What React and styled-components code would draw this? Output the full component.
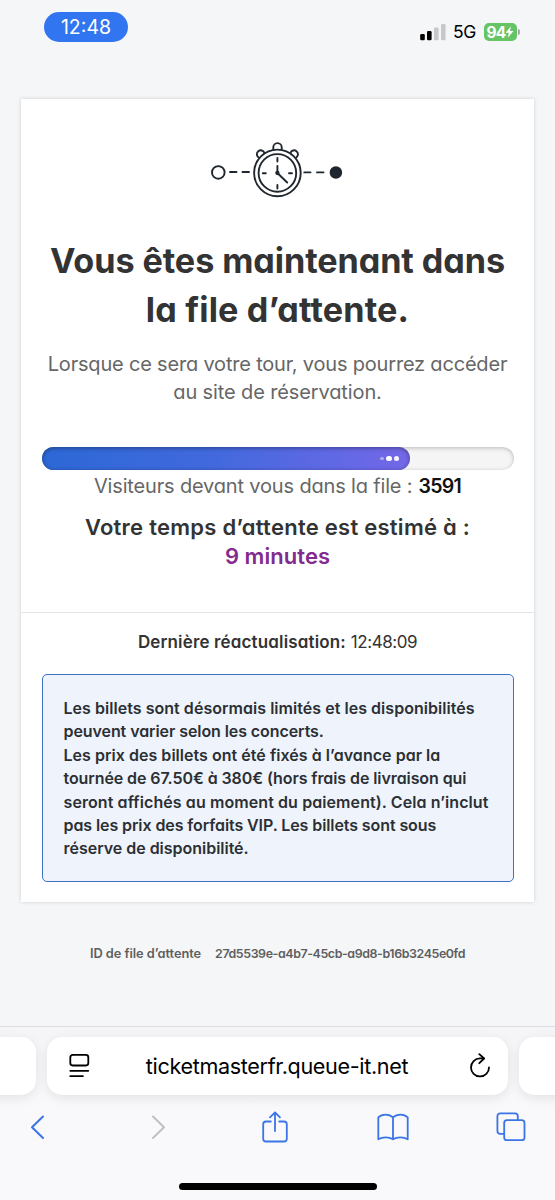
/**
 *
 * QueuePage
 *
 */

import React from 'react';
import styled, { createGlobalStyle } from 'styled-components';

const GlobalStyle = createGlobalStyle`
  * {
    box-sizing: border-box;
  }
  body {
    margin: 0;
    background: #f5f6f8;
    font-family: Inter, 'Open Sans', sans-serif;
  }
`;

const Screen = styled.div`
  display: flex;
  flex-direction: column;
  width: 555px;
  height: 1200px;
  overflow: hidden;
  background: #f5f6f8;
`;

/* status bar */

const StatusBar = styled.header`
  display: flex;
  justify-content: space-between;
  align-items: flex-start;
  flex: none;
  height: 99px;
  padding: 12px 35px 0 44px;
`;

const Clock = styled.div`
  width: 84px;
  height: 30px;
  border-radius: 15px;
  background: #3275f0;
  color: #fff;
  font-size: 19.5px;
  line-height: 30px;
  text-align: center;
`;

const StatusIcons = styled.div`
  display: flex;
  align-items: center;
  height: 20px;
  margin-top: 10px;
`;

const Network = styled.span`
  width: 38px;
  padding-left: 7px;
  color: #000;
  font-size: 17.5px;
  letter-spacing: -0.3px;
  line-height: 20px;
`;

const Battery = styled.div`
  display: flex;
  align-items: center;
  justify-content: center;
  width: 33px;
  height: 18px;
  border-radius: 5px;
  background: #65c466;
  color: #fff;
  font-size: 15.5px;
  font-weight: 700;
  letter-spacing: -0.8px;
`;

const BatteryTip = styled.span`
  width: 2px;
  height: 6px;
  margin-left: 1px;
  border-radius: 0 2px 2px 0;
  background: #a8aaac;
`;

/* card */

const Card = styled.main`
  flex: none;
  height: 803px;
  margin: 0 21px;
  background: #fff;
  box-shadow: 0 0 4px rgba(0, 0, 0, 0.16);
  font-feature-settings: 'cv11';
  text-align: center;
`;

const QueueStatus = styled.section`
  height: 514px;
  padding: 31px 20.5px 0;
  border-bottom: 1px solid #e4e4e4;
`;

const Line = styled.span`
  display: block;
  white-space: nowrap;
  letter-spacing: ${props => props.$track || 0}px;
`;

const Title = styled.h1`
  margin: 26px 0 0;
  color: #333;
  font-size: 34.2px;
  font-weight: 700;
  line-height: 49.2px;
`;

const Subtitle = styled.p`
  margin: 15.6px -10px 0;
  color: #666;
  font-size: 20px;
  line-height: 28.3px;
`;

const Track = styled.div`
  height: 23.5px;
  margin-top: 40px;
  border-radius: 12px;
  background: #f5f5f5;
  box-shadow: inset 0 1px 4px rgba(0, 0, 0, 0.25);
`;

const Fill = styled.div`
  display: flex;
  align-items: center;
  justify-content: flex-end;
  gap: 2.5px;
  height: 100%;
  padding-right: 10.5px;
  border-radius: 12px;
  background: linear-gradient(90deg, #2c68d6 0%, #4169dd 45%, #7468e8 100%);
  box-shadow: inset 0 1px 4px rgba(0, 0, 0, 0.4);
`;

const Dot = styled.span`
  width: ${props => props.$size}px;
  height: ${props => props.$size}px;
  border-radius: 50%;
  background: #fff;
  opacity: ${props => props.$opacity || 1};
`;

const Visitors = styled.p`
  display: flex;
  justify-content: center;
  gap: 6px;
  margin: 2px 0 0;
  color: #666;
  font-size: 20px;
  line-height: 28px;

  strong {
    color: #111;
    font-size: 19.5px;
    font-weight: 600;
    letter-spacing: -0.7px;
  }
`;

const WaitTime = styled.p`
  margin: 13px 0 0;
  color: #333;
  font-size: 22px;
  font-weight: 600;
  line-height: 28.7px;
`;

const Minutes = styled(Line)`
  color: #832b8f;
`;

const Details = styled.section`
  padding: 17px 20.5px 0;
`;

const Updated = styled.p`
  display: flex;
  justify-content: center;
  gap: 5px;
  margin: 0;
  color: #333;
  font-size: 17px;
  line-height: 24px;

  strong {
    font-weight: 600;
    letter-spacing: 0.148px;
  }
`;

const Notice = styled.div`
  height: 207.5px;
  margin-top: 20px;
  padding: 22px 21px 0;
  border: 1.5px solid #3f70c4;
  border-radius: 5px;
  background: #eff4fc;
  color: #2c2f34;
  font-size: 16px;
  font-weight: 600;
  line-height: 23.4px;
  text-align: left;
`;

const QueueId = styled.footer`
  display: flex;
  justify-content: center;
  flex: none;
  gap: 14px;
  height: 124px;
  padding-top: 42px;
  color: #5e5e60;
  font-size: 12.8px;
  font-weight: 600;
  font-feature-settings: 'cv11';
  line-height: 20px;
`;

const Ticket = styled(Line)`
  font-size: 12.4px;
`;

/* browser chrome */

const Browser = styled.nav`
  display: flex;
  flex-direction: column;
  align-items: center;
  flex: 1;
  border-top: 1px solid #dcdde0;
  background: linear-gradient(#f5f5f7, #f9f9fb 50%);
`;

const Tabs = styled.div`
  display: flex;
  justify-content: center;
  gap: 11px;
  width: 555px;
  margin-top: 9.5px;
`;

const Tab = styled.div`
  flex: none;
  width: 461px;
  height: 58px;
  border-radius: 15px;
  background: #fff;
  box-shadow: 0 3px 12px rgba(0, 0, 0, 0.09);
`;

const AddressBar = styled(Tab)`
  display: flex;
  align-items: center;
  justify-content: space-between;
  padding: 0 17px 0 21px;
`;

const Url = styled.span`
  margin-right: 5px;
  color: #000;
  font-size: 21.6px;
  letter-spacing: -0.35px;
`;

const Toolbar = styled.div`
  display: flex;
  justify-content: space-between;
  align-items: center;
  width: 555px;
  height: 36px;
  margin-top: 14.5px;
  padding: 0 27px 0 21px;
  color: #3b74e6;
`;

const Action = styled.div`
  display: flex;
  justify-content: center;
  width: 34px;
`;

const HomeIndicator = styled.div`
  width: 198px;
  height: 6.5px;
  margin-top: 38px;
  border-radius: 4px;
  background: #000;
`;

const Icon = styled.svg`
  display: block;
  flex: none;
  fill: none;
  stroke: ${props => props.$color || 'currentColor'};
  stroke-width: ${props => props.$stroke || 2};
  stroke-linecap: round;
  stroke-linejoin: round;
`;

const StopwatchIcon = styled(Icon)`
  margin: 0 auto;
`;

function Signal() {
  return (
    <svg width="26" height="18" viewBox="0 0 26 18">
      <rect x="0.2" y="11" width="4.6" height="6.2" rx="1.3" fill="#000" />
      <rect x="7" y="8" width="4.6" height="9.2" rx="1.3" fill="#000" />
      <rect x="14" y="4.4" width="4.6" height="12.8" rx="1.3" fill="#c6c8ca" />
      <rect x="21" y="1" width="4.6" height="16.2" rx="1.3" fill="#c6c8ca" />
    </svg>
  );
}

function Bolt() {
  return (
    <svg width="9" height="12" viewBox="0 0 9 12">
      <path d="M5.8 0.3 0.6 6.7h3.2L2.8 11.7 8.5 5H5.1z" fill="#fff" />
    </svg>
  );
}

function Stopwatch() {
  return (
    <StopwatchIcon
      width="155"
      height="80"
      viewBox="200 130 155 80"
      $color="#1f262d"
      $stroke={1.9}
    >
      <circle cx="218.3" cy="172.4" r="6.3" />
      <path d="M230 172h6.5M242.500 172h6.500M304.300 172.400h6.200M317 172.400h6.500" />
      <circle cx="277.4" cy="172.9" r="23.3" />
      <circle cx="277.4" cy="172.9" r="18.8" />
      <path d="M273.3 149.3v-2a4.2 4.2 0 0 1 8.4 0v2" />
      <path d="M258.3 157.3a3.9 3.9 0 1 1 6-4.6M296.500 157.300a3.900 3.900 0 1 0-6-4.600" />
      <path d="M277.4 158v3.5M277.400 185v3.500M262.800 173.200h3M289 173.200h3" />
      <path d="M277.4 166v7l9.8 9.5" />
      <circle cx="277.4" cy="173" r="1.2" />
      <circle cx="335.9" cy="172.5" r="5.3" fill="#1f262d" />
    </StopwatchIcon>
  );
}

function Dots() {
  return (
    <>
      <Dot $size={3.5} $opacity={0.45} />
      <Dot $size={5.5} />
      <Dot $size={5} $opacity={0.95} />
    </>
  );
}

const notice = [
  ['Les billets sont désormais limités et les disponibilités', 0.04],
  ['peuvent varier selon les concerts.', -0.08],
  ['Les prix des billets ont été fixés à l’avance par la', 0.035],
  ['tournée de 67.50€ à 380€ (hors frais de livraison qui', -0.085],
  ['seront affichés au moment du paiement). Cela n’inclut', 0.09],
  ['pas les prix des forfaits VIP. Les billets sont sous', -0.09],
  ['réserve de disponibilité.', -0.02],
];

export default function App() {
  const progress = 78;

  return (
    <Screen>
      <GlobalStyle />
      <StatusBar>
        <Clock>12:48</Clock>
        <StatusIcons>
          <Signal />
          <Network>5G</Network>
          <Battery>
            94
            <Bolt />
          </Battery>
          <BatteryTip />
        </StatusIcons>
      </StatusBar>

      <Card>
        <QueueStatus>
          <Stopwatch />
          <Title>
            <Line $track={-0.09}>Vous êtes maintenant dans</Line>
            <Line $track={0.162}>la file d’attente.</Line>
          </Title>
          <Subtitle>
            <Line $track={-0.19}>
              Lorsque ce sera votre tour, vous pourrez accéder
            </Line>
            <Line $track={-0.12}>au site de réservation.</Line>
          </Subtitle>
          <Track>
            <Fill style={{ width: `${progress}%` }}>
              <Dots />
            </Fill>
          </Track>
          <Visitors>
            <Line $track={-0.165}>Visiteurs devant vous dans la file :</Line>
            <strong>3591</strong>
          </Visitors>
          <WaitTime>
            <Line $track={0.26}>Votre temps d’attente est estimé à :</Line>
            <Minutes $track={0.05}>9 minutes</Minutes>
          </WaitTime>
        </QueueStatus>

        <Details>
          <Updated>
            <strong>Dernière réactualisation:</strong>
            <Line $track={-0.45}>12:48:09</Line>
          </Updated>
          <Notice>
            {notice.map(([text, track]) => (
              <Line key={text} $track={track}>
                {text}
              </Line>
            ))}
          </Notice>
        </Details>
      </Card>

      <QueueId>
        <Line $track={-0.05}>ID de file d’attente</Line>
        <Ticket $track={-0.4}>27d5539e-a4b7-45cb-a9d8-b16b3245e0fd</Ticket>
      </QueueId>

      <Browser>
        <Tabs>
          <Tab />
          <AddressBar>
            <Icon width="22" height="26" viewBox="0 0 22 26" $stroke={1.8}>
              <rect x="2.3" y="1.9" width="18" height="10.6" rx="2.4" />
              <path d="M2.3 17.8h18M2.3 23.2h12.6" />
            </Icon>
            <Url>ticketmasterfr.queue-it.net</Url>
            <Icon width="22" height="26" viewBox="0 0 22 26" $stroke={1.8}>
              <path d="M20 14.4a9 9 0 1 1-9-9h3.6" />
              <path d="M10.3 1.2l4.8 4.3-4.8 4.7" />
            </Icon>
          </AddressBar>
          <Tab />
        </Tabs>
        <Toolbar>
          <Action>
            <Icon width="20" height="30" viewBox="0 0 20 30">
              <path d="M15 4.5 4 15.2 15 26" />
            </Icon>
          </Action>
          <Action>
            <Icon width="20" height="30" viewBox="0 0 20 30" $color="#bfc0c3">
              <path d="M7 4.5 18 15.2 7 26" />
            </Icon>
          </Action>
          <Action>
            <Icon width="28" height="34" viewBox="0 0 28 34" $stroke={1.8}>
              <path d="M9.8 11.5H5a2.8 2.8 0 0 0-2.8 2.8v14.4A2.8 2.8 0 0 0 5 31.500h18a2.800 2.800 0 0 0 2.800-2.800V14.300a2.800 2.800 0 0 0-2.800-2.800h-4.800" />
              <path d="M14 21V2.5M9 7.3l5-5 5 5" />
            </Icon>
          </Action>
          <Action>
            <Icon width="34" height="30" viewBox="0 0 34 30" $stroke={1.8}>
              <path d="M17 5.4C13 1.6 6 1.6 2.3 5.4V27.3C6.5 24.7 13 24.7 17 27.3C21 24.7 27.5 24.7 31.7 27.3V5.4C28 1.6 21 1.6 17 5.4zM17 5.4V27.3" />
            </Icon>
          </Action>
          <Action>
            <Icon width="32" height="32" viewBox="0 0 32 32" $stroke={1.8}>
              <path d="M9 22.8H5.2a2.8 2.8 0 0 1-2.8-2.8V5.2a2.8 2.8 0 0 1 2.8-2.8H20a2.8 2.8 0 0 1 2.8 2.8V9" />
              <rect x="9.2" y="9.2" width="20.3" height="20" rx="2.8" />
            </Icon>
          </Action>
        </Toolbar>
        <HomeIndicator />
      </Browser>
    </Screen>
  );
}
